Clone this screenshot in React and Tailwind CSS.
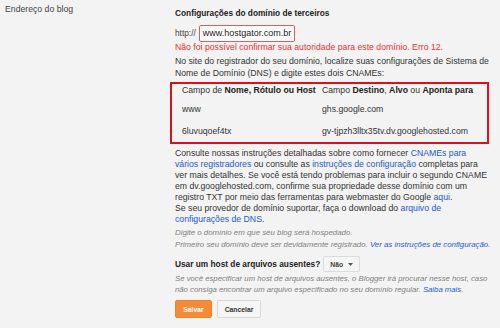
export default function App() {
  const font = { fontFamily: '"Liberation Sans", Arial, sans-serif' };
  const A = ({ children }) => <span className="text-[#1a5ccc]">{children}</span>;
  return (
    <div style={font} className="w-[500px] h-[328px] bg-[#f3f3f3] text-[#333] flex overflow-hidden">
      <div className="w-[175px] shrink-0 pl-[5px] pt-[4px] text-[8.7px] leading-[11px] text-[#444]">
        Endereço do blog
      </div>
      <div className="flex-1 pt-[8px] pr-[5px] text-[8.7px] leading-[11px] whitespace-nowrap">
        <div className="font-bold text-[8.3px] text-[#222] leading-[11px]">Configurações do domínio de terceiros</div>
        <div className="mt-[6px] flex items-center h-[17px]">
          <span className="text-[8.3px] text-[#444]">http://</span>
          <div className="ml-[3px] w-[96px] h-[17px] bg-white border border-[#e25a5a] rounded-[2px] flex items-center px-[3px] text-[9px] text-[#222]">
            www.hostgator.com.br
          </div>
        </div>
        <div className="text-[#e8322f]">Não foi possível confirmar sua autoridade para este domínio. Erro 12.</div>
        <div className="mt-[2px] leading-[12px]">
          <div>No site do registrador do seu domínio, localize suas configurações de Sistema de</div>
          <div>Nome de Domínio (DNS) e digite estes dois CNAMEs:</div>
        </div>
        <div className="mt-[3px] ml-[-5px] w-[319px] border-2 border-[#e0101a] pt-[1px] pb-[5px] pl-[10px]">
          <div className="flex">
            <div className="w-[140px]">Campo de <b className="text-[#222]">Nome, Rótulo ou Host</b></div>
            <div>Campo <b className="text-[#222]">Destino</b>, <b className="text-[#222]">Alvo</b> ou <b className="text-[#222]">Aponta para</b></div>
          </div>
          <div className="flex mt-[8px]">
            <div className="w-[140px]">www</div>
            <div>ghs.google.com</div>
          </div>
          <div className="flex mt-[11px]">
            <div className="w-[140px]">6luvuqoef4tx</div>
            <div>gv-tjpzh3lltx35tv.dv.googlehosted.com</div>
          </div>
        </div>
        <div className="mt-[4px]">
          <div>Consulte nossas instruções detalhadas sobre como fornecer <A>CNAMEs para</A></div>
          <div><A>vários registradores</A> ou consulte as <A>instruções de configuração</A> completas para</div>
          <div>ver mais detalhes. Se você está tendo problemas para incluir o segundo CNAME</div>
          <div>em dv.googlehosted.com, confirme sua propriedade desse domínio com um</div>
          <div>registro TXT por meio das ferramentas para webmaster do Google <A>aqui</A>.</div>
          <div>Se seu provedor de domínio suportar, faça o download do <A>arquivo de</A></div>
          <div><A>configurações de DNS</A>.</div>
        </div>
        <div className="mt-[2px] leading-[12px] italic text-[7.85px] text-[#808080]">
          <div>Digite o domínio em que seu blog será hospedado.</div>
          <div>Primeiro seu domínio deve ser devidamente registrado. <A>Ver as instruções de configuração.</A></div>
        </div>
        <div className="mt-[5px] flex items-center h-[16px]">
          <span className="font-bold text-[8.3px] text-[#222]">Usar um host de arquivos ausentes?</span>
          <div className="ml-[3px] h-[16px] w-[37px] bg-[#f5f5f5] border border-[#dcdcdc] rounded-[2px] flex items-center pl-[6px] gap-[5px]">
            <span className="font-bold text-[6.8px] text-[#444]">Não</span>
            <svg width="5" height="3" viewBox="0 0 5 3"><path d="M0 0h5L2.5 3z" fill="#555" /></svg>
          </div>
        </div>
        <div className="mt-[1px] italic text-[7.75px] text-[#808080]">
          <div>Se você especificar um host de arquivos ausentes, o Blogger irá procurar nesse host, caso</div>
          <div>não consiga encontrar um arquivo especificado no seu domínio regular. <A>Saiba mais.</A></div>
        </div>
        <div className="mt-[5px] flex gap-[5px]">
          <div className="h-[18px] w-[37px] rounded-[2px] bg-[#f58a37] border border-[#f08030] flex items-center justify-center text-white font-bold text-[6.8px]">Salvar</div>
          <div className="h-[18px] w-[44px] rounded-[2px] bg-[#f5f5f5] border border-[#d8d8d8] flex items-center justify-center text-[#333] font-bold text-[6.8px]">Cancelar</div>
        </div>
      </div>
    </div>
  );
}
